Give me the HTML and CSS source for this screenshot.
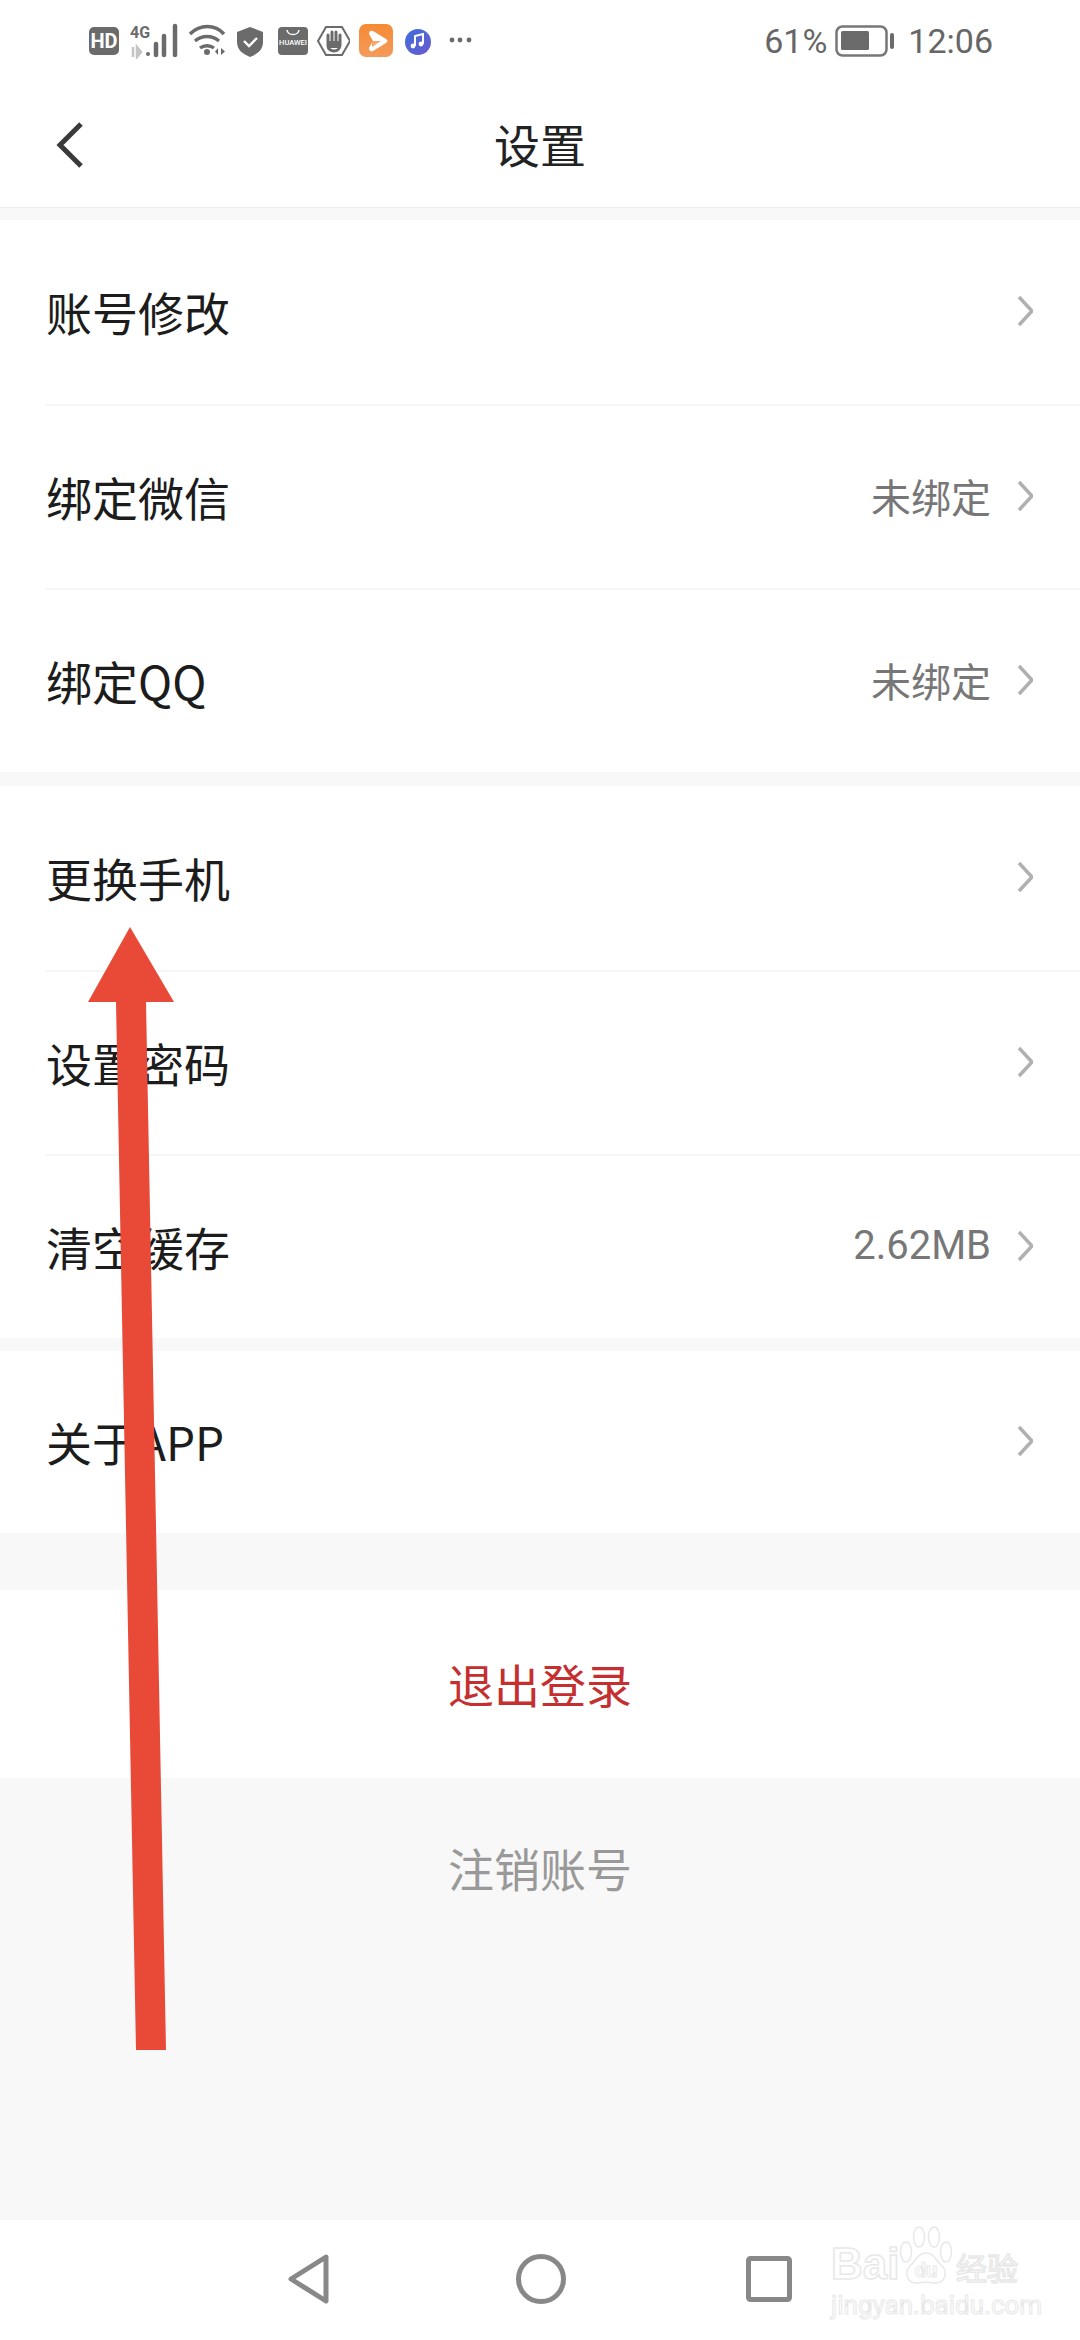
FILE: index.html
```html
<!DOCTYPE html>
<html lang="zh-CN">
<head>
    <meta charset="UTF-8">
    <meta name="viewport" content="width=device-width, initial-scale=1.0">
    <title>设置</title>
    <link rel="stylesheet" href="styles.css">
</head>
<body>
    <!-- Status bar -->
    <div class="status-bar">
        <div class="status-icons">
            <svg width="32" height="36" viewBox="0 0 32 36"><rect x="0" y="4" width="30" height="28" rx="5" fill="#6b6b6b"/><text x="15" y="25" class="ic-text hd">HD</text></svg>
            <svg width="50" height="36" viewBox="0 0 50 36">
                <text x="0" y="15" class="ic-text net">4G</text>
                <path d="M3 24v10M7 24l4 5-4 5z" stroke="#c4c4c4" stroke-width="2.5" fill="#c4c4c4"/>
                <circle cx="18" cy="31" r="2" fill="#6b6b6b"/>
                <path d="M26 21v11M34 13v19M45 3v29" stroke="#6b6b6b" stroke-width="4.5" stroke-linecap="round" fill="none"/>
            </svg>
            <svg width="39" height="36" viewBox="0 0 39 36">
                <path d="M1 11C11 1 26 1 35 11M6 18c7-6 17-6 24 0M11 25c4-3 10-3 14 0" stroke="#6b6b6b" stroke-width="3.4" fill="none"/>
                <circle cx="18" cy="29" r="3" fill="#6b6b6b"/>
                <path d="M29 25v7l-3-3.500zM32 25v7l4-3.500z" fill="#6b6b6b"/>
            </svg>
            <svg width="32" height="36" viewBox="0 0 32 36">
                <path d="M13 4l13 5v10c0 8-6 12-13 15C6 31 0 27 0 19V9z" fill="#6b6b6b"/>
                <path d="M7 18l5 5 8-8" stroke="#fff" stroke-width="2.400" fill="none"/>
            </svg>
            <svg width="30" height="36" viewBox="0 0 30 36">
                <rect x="0" y="4" width="30" height="28" rx="4" fill="#6b6b6b"/>
                <path d="M9 7c1 6 11 6 12 0" stroke="#fff" stroke-width="1.500" fill="none"/>
                <text x="15" y="22" class="ic-text hw">HUAWEI</text>
            </svg>
            <svg width="33" height="36" viewBox="0 0 33 36">
                <path d="M9 4h16l8 14-8 14H9L1 18z" stroke="#6b6b6b" stroke-width="2" fill="#fff"/>
                <path d="M11 19v-7M15 18v-9M19 18v-9M23 19v-7M11 17v6c0 3 3 5 6 5s6-2 6-6v-4" stroke="#6b6b6b" stroke-width="3" stroke-linecap="round" fill="none"/>
                <path d="M12 18h10v7H12z" fill="#6b6b6b"/>
            </svg>
            <svg width="37" height="36" viewBox="0 0 37 36">
                <defs>
                    <linearGradient id="appOrange" x1="0" y1="0" x2="0" y2="1"><stop offset="0" stop-color="#f58a35"/><stop offset="1" stop-color="#f59a5a"/></linearGradient>
                    <linearGradient id="musicBlue" x1="0" y1="0" x2="1" y2="1"><stop offset="0" stop-color="#3f6fd8"/><stop offset="1" stop-color="#6a5ad0"/></linearGradient>
                </defs>
                <rect x="0" y="1" width="34" height="33" rx="7" fill="url(#appOrange)"/>
                <path d="M10 11c0-3 2-4 4-3l13 8c2 1 2 3 0 4l-13 8c-2 1-4 0-4-3l4-7z" fill="#fff"/>
                <path d="M13 18h9l-9 6z" fill="#f7a66f"/>
            </svg>
            <svg width="35" height="36" viewBox="0 0 35 36">
                <circle cx="13" cy="19" r="13" fill="url(#musicBlue)"/>
                <path d="M10 23v-10l8-2v10" stroke="#fff" stroke-width="2" fill="none"/>
                <circle cx="8" cy="23" r="2.400" fill="#fff"/>
                <circle cx="16" cy="21" r="2.400" fill="#fff"/>
            </svg>
            <svg width="23" height="36" viewBox="0 0 23 36">
                <circle cx="3" cy="17" r="2.400" fill="#6b6b6b"/>
                <circle cx="11" cy="17" r="2.400" fill="#6b6b6b"/>
                <circle cx="20" cy="17" r="2.400" fill="#6b6b6b"/>
            </svg>
        </div>
        <div class="status-right">
            <span class="status-text">61%</span>
            <svg class="battery" width="59" height="36" viewBox="0 0 59 36">
                <rect x="1.500" y="3.500" width="50" height="29" rx="6" stroke="#777" stroke-width="2.500" fill="none"/>
                <rect x="6" y="8" width="28" height="19" rx="1.500" fill="#6b6b6b"/>
                <rect x="55" y="10" width="4" height="16" rx="2" fill="#6b6b6b"/>
            </svg>
            <span class="status-text time">12:06</span>
        </div>
    </div>

    <!-- Title bar -->
    <div class="title-bar">
        <svg class="back-icon" width="30" height="48" viewBox="0 0 30 48"><path d="M26 3L5 24l21 21" stroke="#3a3a3a" stroke-width="5" fill="none"/></svg>
        <h1>设置</h1>
    </div>

    <div class="main">
        <div class="group">
            <div class="row"><span class="label">账号修改</span><svg class="chevron" width="16" height="32" viewBox="0 0 16 32"><path d="M2 2l13 14L2 30" stroke="#b0b0b0" stroke-width="3.500" fill="none"/></svg></div>
            <div class="row"><span class="label">绑定微信</span><span class="value">未绑定</span><svg class="chevron" width="16" height="32" viewBox="0 0 16 32"><path d="M2 2l13 14L2 30" stroke="#b0b0b0" stroke-width="3.500" fill="none"/></svg></div>
            <div class="row"><span class="label">绑定QQ</span><span class="value">未绑定</span><svg class="chevron" width="16" height="32" viewBox="0 0 16 32"><path d="M2 2l13 14L2 30" stroke="#b0b0b0" stroke-width="3.500" fill="none"/></svg></div>
        </div>
        <div class="group">
            <div class="row"><span class="label">更换手机</span><svg class="chevron" width="16" height="32" viewBox="0 0 16 32"><path d="M2 2l13 14L2 30" stroke="#b0b0b0" stroke-width="3.500" fill="none"/></svg></div>
            <div class="row"><span class="label">设置密码</span><svg class="chevron" width="16" height="32" viewBox="0 0 16 32"><path d="M2 2l13 14L2 30" stroke="#b0b0b0" stroke-width="3.500" fill="none"/></svg></div>
            <div class="row"><span class="label">清空缓存</span><span class="value">2.62MB</span><svg class="chevron" width="16" height="32" viewBox="0 0 16 32"><path d="M2 2l13 14L2 30" stroke="#b0b0b0" stroke-width="3.500" fill="none"/></svg></div>
        </div>
        <div class="group group-last">
            <div class="row"><span class="label">关于APP</span><svg class="chevron" width="16" height="32" viewBox="0 0 16 32"><path d="M2 2l13 14L2 30" stroke="#b0b0b0" stroke-width="3.500" fill="none"/></svg></div>
        </div>
        <div class="logout">退出登录</div>
        <div class="cancel">注销账号</div>
    </div>

    <!-- Navigation bar -->
    <div class="nav-bar">
        <svg width="48" height="50" viewBox="0 0 48 50"><path d="M38 3L3 25l35 22z" stroke="#888" stroke-width="5" stroke-linejoin="round" fill="none"/></svg>
        <svg width="50" height="50" viewBox="0 0 50 50"><circle cx="25" cy="25" r="22.500" stroke="#888" stroke-width="5" fill="none"/></svg>
        <svg width="46" height="46" viewBox="0 0 46 46"><rect x="2.500" y="2.500" width="41" height="41" rx="2" stroke="#888" stroke-width="5" fill="none"/></svg>
    </div>

    <!-- Red arrow drawn over the screenshot -->
    <svg class="arrow" width="1080" height="2340" viewBox="0 0 1080 2340"><polygon points="130,927 174,1002 146,1002 166,2050 136,2050 116,1002 88,1002" fill="#e94a38"/></svg>

    <!-- Watermark -->
    <div class="watermark">
        <div class="wm-top">
            <span class="wm-bai">Bai</span>
            <svg class="wm-paw" width="54" height="60" viewBox="0 0 54 60">
                <g stroke="#e8e8e8" stroke-width="1.500" fill="#fff">
                    <ellipse cx="7" cy="26" rx="5.500" ry="10"/>
                    <ellipse cx="20" cy="11" rx="5.500" ry="10"/>
                    <ellipse cx="35" cy="11" rx="5.500" ry="10"/>
                    <ellipse cx="47" cy="26" rx="5.500" ry="10"/>
                    <path d="M27 27c-8 0-10 8-16 13-6 6-3 17 6 17 4 0 7-1 10-1s6 1 10 1c9 0 12-11 6-17-6-5-8-13-16-13z"/>
                </g>
                <text x="27" y="51" class="wm-du">du</text>
            </svg>
            <span class="wm-jy">经验</span>
        </div>
        <div class="wm-url">jingyan.baidu.com</div>
    </div>
</body>
</html>
```

FILE: styles.css
```css
/* General Styling */
* {
    box-sizing: border-box;
}

body {
    font-family: Roboto, 'Noto Sans CJK SC', sans-serif;
    background: #f8f8f8;
    margin: 0;
    padding: 0;
    width: 1080px;
    height: 2340px;
    position: relative;
    overflow: hidden;
    display: flex;
    flex-direction: column;
}

/* Status Bar */
.status-bar {
    height: 60px;
    background: white;
    display: flex;
    justify-content: space-between;
    padding: 23px 87px 0 89px;
}

.status-icons {
    display: flex;
    gap: 9px;
    height: 36px;
}

.status-right {
    display: flex;
    height: 36px;
    align-items: center;
}

.status-text {
    font-size: 34px;
    line-height: 36px;
    color: #666;
}

.battery {
    margin-left: 8px;
}

.time {
    margin-left: 14px;
}

.ic-text {
    font-family: Roboto, sans-serif;
    font-weight: 700;
    text-anchor: middle;
}

.ic-text.hd {
    font-size: 20px;
    fill: white;
}

.ic-text.net {
    font-size: 16px;
    fill: #6b6b6b;
    text-anchor: start;
}

.ic-text.hw {
    font-size: 7.500px;
    font-weight: 500;
    fill: white;
}

/* Title Bar */
.title-bar {
    height: 148px;
    background: white;
    border-bottom: 1px solid #ececec;
    display: flex;
    align-items: center;
    justify-content: center;
    position: relative;
    padding-top: 18px;
    margin-bottom: 12px;
}

.title-bar h1 {
    margin: 0;
    font-size: 46px;
    font-weight: 400;
    color: #222;
}

.back-icon {
    position: absolute;
    left: 55px;
    top: 61px;
}

/* Settings Rows */
.main {
    flex: 1;
    display: flex;
    flex-direction: column;
}

.group {
    background: white;
    margin-bottom: 14px;
}

.group-last {
    margin-top: -1px;
    margin-bottom: 57px;
}

.row {
    height: 184px;
    margin-left: 46px;
    padding-right: 47px;
    display: flex;
    align-items: center;
    border-top: 2px solid #f6f6f6;
}

.row:first-child {
    border-top: none;
}

.group-last .row {
    height: 182px;
}

.label {
    flex: 1;
    font-family: 'Noto Sans CJK SC', sans-serif;
    font-size: 46px;
    color: #1c1c1c;
    margin-top: -3px;
}

.value {
    font-size: 40px;
    color: #777;
    margin-right: 26px;
    margin-top: -3px;
}

.chevron {
    margin-top: -2px;
}

.logout {
    height: 188px;
    background: white;
    color: #c62f2f;
    font-size: 46px;
    text-align: center;
    line-height: 188px;
    padding-top: 3px;
}

.cancel {
    color: #999;
    font-size: 46px;
    text-align: center;
    line-height: 64px;
    padding-top: 61px;
}

/* Navigation Bar */
.nav-bar {
    height: 120px;
    background: white;
    position: relative;
    display: flex;
    align-items: center;
    padding: 0 288px 2px;
    justify-content: space-between;
}

/* Overlays */
.arrow {
    position: absolute;
    left: 0;
    top: 0;
    pointer-events: none;
}

.watermark {
    position: absolute;
    left: 831px;
    top: 2224px;
    width: 195px;
}

.wm-top {
    display: flex;
    align-items: flex-end;
    height: 62px;
}

.wm-bai,
.wm-jy,
.wm-url,
.wm-du {
    color: white;
    -webkit-text-stroke: 1.500px #e8e8e8;
}

.wm-bai {
    font-family: 'Liberation Sans', sans-serif;
    font-size: 44px;
    line-height: 44px;
    font-weight: 700;
    width: 68px;
}

.wm-paw {
    flex: none;
}

.wm-jy {
    font-size: 31px;
    line-height: 38px;
    font-family: 'Noto Sans CJK SC', sans-serif;
    margin-left: 3px;
    white-space: nowrap;
}

.wm-du {
    font-size: 20px;
    font-weight: 700;
    text-anchor: middle;
    fill: white;
    stroke: #e8e8e8;
    stroke-width: 1px;
    -webkit-text-stroke: 0;
}

.wm-url {
    font-size: 26px;
    line-height: 28px;
    margin-top: 5px;
    -webkit-text-stroke-width: 1px;
    white-space: nowrap;
}
```
